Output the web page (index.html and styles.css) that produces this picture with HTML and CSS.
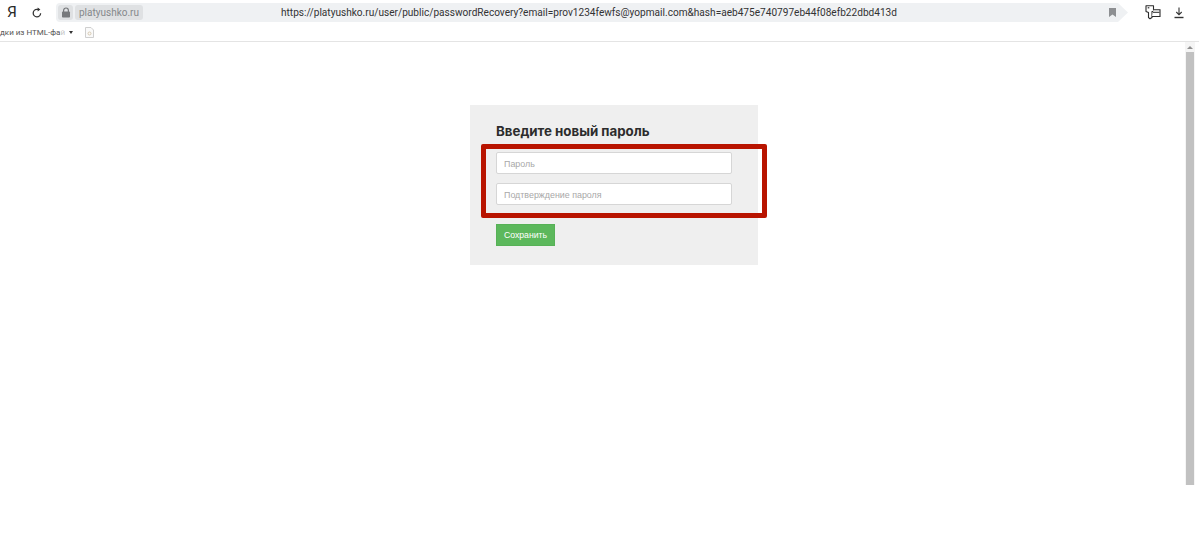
FILE: index.html
```html
<!DOCTYPE html>
<html lang="ru">
<head>
<meta charset="utf-8">
<title>Восстановление пароля</title>
<link rel="stylesheet" href="styles.css">
</head>
<body>
<header class="toolbar">
  <span class="ya">Я</span>
  <svg class="reload" width="12" height="12" viewBox="0 0 12 12"><path d="M9.6 6.2A3.7 3.7 0 1 1 6 2.4h1.6" fill="none" stroke="#333" stroke-width="1.3"/><path d="M6.6 0.4 9.4 2.4 6.6 4.4Z" fill="#333"/></svg>
  <div class="omnibox">
    <div class="lock-chip"><svg width="10" height="11" viewBox="0 0 10 11"><path d="M2.6 5V3.4a2.4 2.4 0 0 1 4.8 0V5" fill="none" stroke="#77797c" stroke-width="1.2"/><rect x="1" y="4.6" width="8" height="6" rx=".8" fill="#77797c"/></svg></div>
    <div class="domain-chip">platyushko.ru</div>
    <div class="url">https://platyushko.ru/user/public/passwordRecovery?email=prov1234fewfs@yopmail.com&amp;hash=aeb475e740797eb44f08efb22dbd413d</div>
    <svg class="bookmark" width="7" height="9" viewBox="0 0 7 9"><path d="M0 0H7V9L3.5 6.6 0 9Z" fill="#8d8f92"/></svg>
  </div>
  <div class="tools">
    <svg width="16" height="15" viewBox="0 0 16 15"><path d="M1 .8H8.500V6.500H7V12.500L5 13.800 3.500 12.500V7.500L1 6.500Z" fill="#fff" stroke="#2b2b2b" stroke-width="1.100" stroke-linejoin="round"/><path d="M2.700 2.800H4.300" stroke="#2b2b2b" stroke-width="1.200"/><path d="M8.500 4.800H15V11.500H7" fill="#fff" stroke="#2b2b2b" stroke-width="1.100"/><path d="M8 7.300H14.500" stroke="#2b2b2b" stroke-width="1"/></svg>
    <svg width="10" height="12" viewBox="0 0 10 12"><path d="M5 .5V7.500M2.300 5 5 7.800 7.700 5" fill="none" stroke="#333" stroke-width="1.100"/><path d="M.5 10.500H9.500" stroke="#333" stroke-width="1.400"/></svg>
  </div>
</header>
<nav class="bookmarks">
  <span class="folder">дки из HTML-фа<span class="fade">й</span></span>
  <span class="caret"></span>
  <svg class="file" width="9" height="11" viewBox="0 0 9 11"><path d="M.5.500H6L8.500 3V10.500H.5Z" fill="#fafafa" stroke="#cfcfcf"/><circle cx="4.500" cy="6.500" r="1.500" fill="none" stroke="#d8c9b0"/></svg>
</nav>
<div class="viewport">
  <main class="page">
    <form class="card">
      <h1 class="title">Введите новый пароль</h1>
      <input class="field" type="password" placeholder="Пароль">
      <input class="field" type="password" placeholder="Подтверждение пароля">
      <button class="save" type="button">Сохранить</button>
      <div class="callout"></div>
    </form>
  </main>
  <aside class="scrollbar">
    <span class="arrow"></span>
    <span class="thumb"></span>
  </aside>
</div>
</body>
</html>
```
FILE: styles.css
```css
* { box-sizing: border-box; }
html, body { height: 100%; }
body {
  margin: 0;
  display: flex;
  flex-direction: column;
  overflow: hidden;
  background: #fff;
  font-family: "Liberation Sans", Arial, sans-serif;
  color: #333;
}
.toolbar {
  height: 22px;
  padding-top: 3px;
  display: flex;
  align-items: center;
  flex: none;
}
.ya {
  width: 13px;
  margin-left: 7px;
  font: 15.500px/16px Roboto, sans-serif;
  padding-bottom: 1px;
  color: #2a2a2a;
}
.reload { margin-left: 11px; }
.omnibox {
  position: relative;
  margin-left: 13px;
  width: 1072px;
  height: 19px;
  display: flex;
  align-items: center;
  background: #eff1f3;
  border-radius: 4px 0 0 4px;
  clip-path: polygon(0 0, 1062px 0, 100% 50%, 1062px 100%, 0 100%);
}
.lock-chip {
  width: 15px;
  height: 15px;
  margin-left: 2px;
  display: flex;
  align-items: center;
  justify-content: center;
  background: #dfe1e3;
  border-radius: 3px;
}
.domain-chip {
  margin-left: 2px;
  width: 68px;
  height: 15px;
  font: 10px/15px Roboto, sans-serif;
  color: #85888b;
  text-align: center;
  background: #dfe1e3;
  border-radius: 3px;
}
.url {
  margin-left: 138px;
  font: 10.100px/19px Roboto, sans-serif;
  color: #333;
  white-space: nowrap;
}
.bookmark { position: absolute; left: 1053px; top: 5px; }
.tools {
  margin-left: 17px;
  display: flex;
  align-items: center;
  gap: 13px;
}
.bookmarks {
  height: 20px;
  flex: none;
  padding-top: 1px;
  display: flex;
  align-items: center;
  border-bottom: 1px solid #e4e4e4;
  font: 8px Roboto, sans-serif;
  color: #555;
}
.folder { white-space: nowrap; }
.fade { opacity: .35; }
.caret {
  margin-left: 4px;
  border-left: 2.500px solid transparent;
  border-right: 2.500px solid transparent;
  border-top: 3.500px solid #333;
}
.file { margin-left: 12px; }
.viewport {
  flex: 1;
  display: flex;
  min-height: 0;
}
.page {
  flex: 1;
  display: flex;
  justify-content: flex-start;
  padding: 63px 0 0 470px;
}
.card {
  position: relative;
  width: 288px;
  height: 160px;
  padding: 18px 26px 0;
  display: flex;
  flex-direction: column;
  align-items: flex-start;
  background: #efefef;
}
.title {
  margin: 0 0 12px;
  font: 700 13.300px/17px Inter, "Liberation Sans", sans-serif;
  color: #2c2c2c;
}
.field {
  width: 236px;
  height: 22px;
  margin-bottom: 9px;
  padding: 1px 7px 0;
  background: #fff;
  border: 1px solid #d6d6d6;
  border-radius: 2px;
  font: 8.900px "Liberation Sans", sans-serif;
  outline: none;
}
.field::placeholder { color: #a8a8a8; opacity: 1; }
.save {
  margin-top: 10px;
  width: 59px;
  height: 22px;
  padding: 0;
  background: #5cb85c;
  border: 1px solid #57b157;
  color: #fff;
  font: 8.700px "Liberation Sans", sans-serif;
}
.callout {
  position: absolute;
  left: 11px;
  top: 39px;
  width: 286px;
  height: 74px;
  border: 5px solid #b81400;
  border-radius: 2px;
  pointer-events: none;
}
.scrollbar {
  width: 10px;
  flex: none;
  margin-right: 4px;
  padding: 4px 1px 0;
  display: flex;
  flex-direction: column;
  align-items: center;
  height: 443px;
  background: #f5f5f5;
}
.arrow {
  border-left: 3px solid transparent;
  border-right: 3px solid transparent;
  border-bottom: 3px solid #8f8f8f;
}
.thumb {
  margin-top: 3px;
  width: 8px;
  flex: 1;
  background: #c1c1c1;
}
```
